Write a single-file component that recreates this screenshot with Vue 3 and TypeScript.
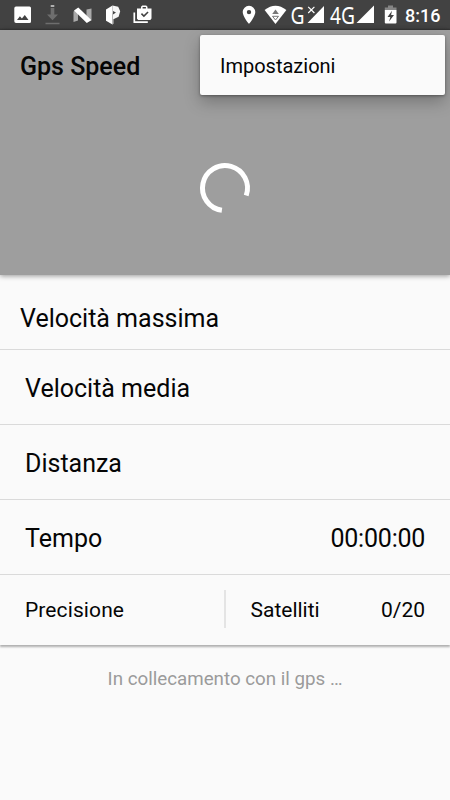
<script setup lang="ts">
interface StatRow {
  label: string
  value: string
  flush?: boolean
}

const title = 'Gps Speed'
const menuItems: string[] = ['Impostazioni']
const rows: StatRow[] = [
  { label: 'Velocità massima', value: '', flush: true },
  { label: 'Velocità media', value: '' },
  { label: 'Distanza', value: '' },
  { label: 'Tempo', value: '00:00:00' },
]
const satellites = '0/20'
const clock = '8:16'
</script>

<template>
  <div class="screen">
    <div class="status-bar">
      <div class="notifications">
        <svg class="picture" width="18" height="18" viewBox="0 0 18 18">
          <path fill="#fff" fill-rule="evenodd" d="M2 .5h13.500a1.500 1.500 0 0 1 1.500 1.500v13.500a1.500 1.500 0 0 1-1.500 1.500H2a1.700 1.700 0 0 1-1.700-1.700V2.200A1.700 1.700 0 0 1 2 .5zM3 14h11.500l-3.700-5-2.900 3.600-2-2.300z" />
        </svg>
        <svg class="download" width="16" height="22" viewBox="0 0 16 22">
          <path fill="#b0b0b0" d="M5.700 1h3.600v2H5.700z" />
          <path fill="#6e6e6e" d="M5.700 4h3.600v6.500H13l-5.500 5.700L2 10.500h3.700zM.5 18.700h14v1.600H.5z" />
        </svg>
        <svg class="nougat" width="20" height="18" viewBox="0 0 20 18">
          <path fill="#a9a9a9" d="M.5 4.500 5 1.500v12L.5 15zM13.500 2.500l5-1v12l-5 2z" />
          <path fill="#fff" d="M5.300.5 18.300 13l-4.500 3L1 3.500z" />
        </svg>
        <svg class="pixel" width="16" height="20" viewBox="0 0 16 20">
          <path fill="#fff" d="M1 4.500 7.500.5v19L1 15.700z" />
          <path fill="#f5f5f5" fill-rule="evenodd" d="m7.500.5 5.700 1.200 2 4.500-1.600 5.500-5.200 2.500v4.600l-.9.7zM8 6v3.500l3-2z" />
          <path stroke="#aaa" stroke-width=".7" d="M7.500 8.500v10.500" />
        </svg>
        <svg class="bag" width="20" height="20" viewBox="0 0 20 20">
          <path fill="none" stroke="#fff" stroke-width="1.700" d="M1.300 7.500v9.700h13.500" />
          <path fill="#fff" fill-rule="evenodd" d="M4 3.600h4V1.800L9.300.5h3.900l1.300 1.300v1.800h4v9.900L17.300 15H5.200L4 13.800zM9.600 3.600h3.300V2.100H9.600zM7.900 9.200l3 3 4.700-4.700-1.100-1.100-3.600 3.500-1.900-1.800z" />
        </svg>
      </div>
      <div class="system">
        <svg class="pin" width="14" height="20" viewBox="0 0 14 20">
          <path fill="#fff" fill-rule="evenodd" d="M7 .8A6.300 6.300 0 0 0 .7 7.100C.7 11.800 7 19 7 19s6.300-7.200 6.300-11.900A6.300 6.300 0 0 0 7 .8zm0 4.100a2.200 2.200 0 1 1 0 4.400 2.200 2.200 0 0 1 0-4.400z" />
        </svg>
        <svg class="wifi" width="24" height="20" viewBox="0 0 24 20">
          <path fill="#fff" d="M.6 5Q11.500-3.500 22.400 5L11.500 19z" />
          <path fill="#777" d="m11.500 4.500 3.300 4.500H8.200z" />
          <path fill="#fff" stroke="#777" stroke-width="1" d="m11.500 15-3-3.700h6z" />
        </svg>
        <svg class="cell" width="37" height="30" viewBox="0 0 37 30">
          <text class="network" x=".5" y="23.700" textLength="14" lengthAdjust="spacingAndGlyphs">G</text>
          <path fill="#fff" d="M17.500 23h16.500V6z" />
          <path fill="none" stroke="#424242" stroke-width="3" d="m18.200 6.800 6.200 6.200m0-6.200-6.200 6.200" />
          <path fill="none" stroke="#fff" stroke-width="1.200" d="m18.200 6.800 6.200 6.200m0-6.200-6.200 6.200" />
        </svg>
        <svg class="cell-lte" width="48" height="30" viewBox="0 0 48 30">
          <text class="network" x="2" y="23.700" textLength="25" lengthAdjust="spacingAndGlyphs">4G</text>
          <path fill="#fff" d="M28.500 23H46V5.500z" />
        </svg>
        <svg class="battery" width="14" height="20" viewBox="0 0 14 20">
          <path fill="#858585" d="M4 .5h5v2h3.500V5H.8V2.500H4z" />
          <path fill="#fff" fill-rule="evenodd" d="M.8 5h11.700v12.500a1 1 0 0 1-1 1H1.800a1 1 0 0 1-1-1zm7.200.8L3.500 12h2.800l-1.200 4.600 4.900-6.500H7.100z" />
        </svg>
        <span class="clock">{{ clock }}</span>
      </div>
    </div>

    <header class="hero">
      <h1>{{ title }}</h1>
      <svg class="spinner" width="50" height="50" viewBox="0 0 50 50">
        <path fill="none" stroke="#fff" stroke-width="5" d="M21.900 47.300A22.500 22.500 0 1 1 46.200 32.500" />
      </svg>
    </header>

    <main>
      <div v-for="row in rows" :key="row.label" class="row" :class="{ flush: row.flush }">
        <span>{{ row.label }}</span>
        <span class="value">{{ row.value }}</span>
      </div>
      <div class="details">
        <div class="detail precision"><span>Precisione</span></div>
        <div class="detail satellites">
          <span>Satelliti</span>
          <span>{{ satellites }}</span>
        </div>
      </div>
    </main>
    <p class="connecting">In collecamento con il gps …</p>

    <div class="menu">
      <div v-for="item in menuItems" :key="item" class="menu-item">{{ item }}</div>
    </div>
  </div>
</template>

<style>
body {
  margin: 0;
  background: #fafafa;
}
</style>

<style scoped>
.screen {
  position: relative;
  width: 450px;
  height: 800px;
  overflow: hidden;
  box-sizing: border-box;
  background: #fafafa;
  color: #050505;
  font-family: Roboto, "Noto Sans", sans-serif;
}
.status-bar {
  display: flex;
  justify-content: space-between;
  height: 30px;
  background: linear-gradient(#424242 28px, #353535 30px);
}
.notifications,
.system {
  display: flex;
  align-items: flex-start;
}
svg {
  display: block;
  flex: none;
  overflow: visible;
}
.picture { margin: 6px 0 0 14px; }
.download { margin: 4px 0 0 13px; }
.nougat { margin: 7px 0 0 12px; }
.pixel { margin: 5px 0 0 12px; }
.bag { margin: 5px 0 0 12px; }
.pin { margin-top: 5px; }
.wifi { margin: 5px 0 0 8px; }
.cell { margin-left: 2px; }
.cell-lte { margin-left: 1px; }
.battery { margin: 5px 0 0 8px; }
.network {
  font-family: "Noto Sans", sans-serif;
  font-size: 23.500px;
  fill: #fff;
}
.clock {
  width: 35px;
  margin: 0 10px 0 7px;
  color: #fff;
  font-size: 18px;
  font-weight: 500;
  line-height: 31px;
  white-space: nowrap;
}
.hero {
  position: relative;
  display: flex;
  flex-direction: column;
  align-items: center;
  height: 245px;
  background: #9e9e9e;
  box-shadow: 0 1px 5px rgba(0, 0, 0, 0.4);
}
h1 {
  align-self: flex-start;
  height: 72px;
  margin: 0 0 60.500px 20px;
  font-size: 25px;
  font-weight: 500;
  line-height: 73px;
}
.row {
  display: flex;
  justify-content: space-between;
  height: 74px;
  padding: 0 25px;
  border-bottom: 1px solid #dadada;
  font-size: 25px;
  line-height: 78px;
}
.row.flush {
  height: 64px;
  padding: 10px 20px 0;
  line-height: 68px;
}
.value {
  margin-right: -0.200px;
  letter-spacing: -0.200px;
}
.details {
  display: flex;
  height: 70px;
  box-shadow: 0 2px 2px rgba(0, 0, 0, 0.3);
}
.detail {
  display: flex;
  justify-content: space-between;
  font-size: 21px;
  line-height: 70px;
}
.precision {
  box-sizing: border-box;
  width: 224px;
  padding-left: 25px;
  letter-spacing: 0.100px;
}
.satellites {
  flex: 1;
  height: 38px;
  margin-top: 15px;
  padding: 0 25px 0 24.500px;
  border-left: 2px solid #e4e4e4;
  line-height: 40px;
}
.connecting {
  margin: 19px 0 0;
  color: #9b9b9b;
  font-size: 18.750px;
  line-height: 30px;
  text-align: center;
}
.menu {
  position: absolute;
  top: 35px;
  right: 5px;
  width: 245px;
  height: 60px;
  border-radius: 2px;
  background: #fafafa;
  box-shadow: 0 7px 16px rgba(0, 0, 0, 0.25), 0 1px 3px rgba(0, 0, 0, 0.35);
}
.menu-item {
  padding-left: 20px;
  font-size: 20px;
  line-height: 63px;
}
</style>
